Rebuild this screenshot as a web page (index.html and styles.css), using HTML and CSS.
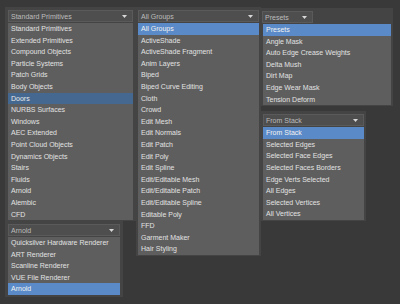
FILE: index.html
```html
<!DOCTYPE html>
<html lang="en">
<head>
  <meta charset="UTF-8" />
  <title>Dropdown lists</title>
  <link rel="stylesheet" href="styles.css">
</head>
<body>

  <div class="screen">

    <div class="col">
      <div class="drop drop-std">
        <div class="combo">
          <span>Standard Primitives</span>
          <svg class="arrow" width="5" height="3" viewBox="0 0 5 3"><polygon points="0,0 5,0 2.5,3" /></svg>
        </div>
        <ul class="list">
          <li>Standard Primitives</li>
          <li>Extended Primitives</li>
          <li>Compound Objects</li>
          <li>Particle Systems</li>
          <li>Patch Grids</li>
          <li>Body Objects</li>
          <li class="sel-dim">Doors</li>
          <li>NURBS Surfaces</li>
          <li>Windows</li>
          <li>AEC Extended</li>
          <li>Point Cloud Objects</li>
          <li>Dynamics Objects</li>
          <li>Stairs</li>
          <li>Fluids</li>
          <li>Arnold</li>
          <li>Alembic</li>
          <li>CFD</li>
        </ul>
      </div>

      <div class="drop drop-render">
        <div class="combo">
          <span>Arnold</span>
          <svg class="arrow" width="5" height="3" viewBox="0 0 5 3"><polygon points="0,0 5,0 2.5,3" /></svg>
        </div>
        <ul class="list">
          <li>Quicksilver Hardware Renderer</li>
          <li>ART Renderer</li>
          <li>Scanline Renderer</li>
          <li>VUE File Renderer</li>
          <li class="sel">Arnold</li>
        </ul>
      </div>
    </div>

    <div class="col">
      <div class="drop drop-groups">
        <div class="combo">
          <span>All Groups</span>
          <svg class="arrow" width="5" height="3" viewBox="0 0 5 3"><polygon points="0,0 5,0 2.5,3" /></svg>
        </div>
        <ul class="list">
          <li class="sel">All Groups</li>
          <li>ActiveShade</li>
          <li>ActiveShade Fragment</li>
          <li>Anim Layers</li>
          <li>Biped</li>
          <li>Biped Curve Editing</li>
          <li>Cloth</li>
          <li>Crowd</li>
          <li>Edit Mesh</li>
          <li>Edit Normals</li>
          <li>Edit Patch</li>
          <li>Edit Poly</li>
          <li>Edit Spline</li>
          <li>Edit/Editable Mesh</li>
          <li>Edit/Editable Patch</li>
          <li>Edit/Editable Spline</li>
          <li>Editable Poly</li>
          <li>FFD</li>
          <li>Garment Maker</li>
          <li>Hair Styling</li>
        </ul>
      </div>
    </div>

    <div class="col col-right">
      <div class="drop drop-presets">
        <div class="combo combo-short">
          <span>Presets</span>
          <svg class="arrow" width="5" height="3" viewBox="0 0 5 3"><polygon points="0,0 5,0 2.5,3" /></svg>
        </div>
        <ul class="list">
          <li class="sel">Presets</li>
          <li>Angle Mask</li>
          <li>Auto Edge Crease Weights</li>
          <li>Delta Mush</li>
          <li>Dirt Map</li>
          <li>Edge Wear Mask</li>
          <li>Tension Deform</li>
        </ul>
      </div>

      <div class="drop drop-stack">
        <div class="combo">
          <span>From Stack</span>
          <svg class="arrow" width="5" height="3" viewBox="0 0 5 3"><polygon points="0,0 5,0 2.5,3" /></svg>
        </div>
        <ul class="list">
          <li class="sel">From Stack</li>
          <li>Selected Edges</li>
          <li>Selected Face Edges</li>
          <li>Selected Faces Borders</li>
          <li>Edge Verts Selected</li>
          <li>All Edges</li>
          <li>Selected Vertices</li>
          <li>All Vertices</li>
        </ul>
      </div>
    </div>

  </div>

</body>
</html>
```

FILE: styles.css
```css
body {
  margin: 0;
  background: #393939;
  font-family: 'Liberation Sans', Arial, sans-serif;
  font-size: 7px;
  color: #e2e2e2;
}

.screen {
  display: flex;
  align-items: flex-start;
  padding: 7px 0 0 5px;
}

.col {
  display: flex;
  flex-direction: column;
}

.col-right {
  margin-top: 1px;
}

.drop {
  background: #444444;
  padding: 3px 3px 1px;
}

.drop-std { width: 125px; }
.drop-render { width: 112px; padding-bottom: 2px; }
.drop-groups { width: 121px; padding: 3px 2px 1px; }
.drop-presets { width: 128px; padding: 3px 2px 1px; }
.drop-stack { width: 101px; padding: 3px 2px 1px; margin-top: 5px; }

.combo {
  box-sizing: border-box;
  height: 12px;
  margin-bottom: 1px;
  padding: 0 5px 0 2px;
  display: flex;
  align-items: center;
  justify-content: space-between;
  background: #4e4e4e;
  border: 1px solid #5a5a5a;
  color: #bdbdbd;
}

.combo-short {
  width: 51px;
  margin-left: -1px;
}

.arrow {
  fill: #d8d8d8;
}

.list {
  list-style: none;
  margin: 0;
  padding: 0;
  background: #5e5e5e;
}

.list li {
  height: 11.6px;
  line-height: 11.6px;
  padding-left: 3px;
  white-space: nowrap;
}

.list .sel {
  background: #5a8ac7;
  color: #f2f2f2;
}

.list .sel-dim {
  background: #456891;
  color: #eaeaea;
}
```
